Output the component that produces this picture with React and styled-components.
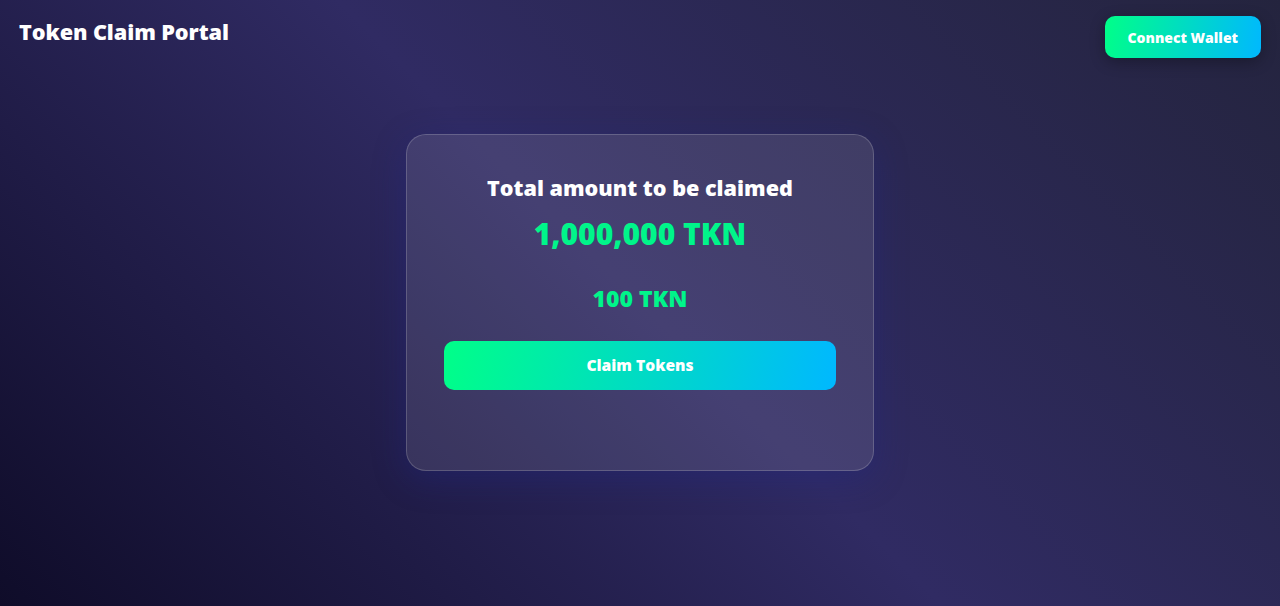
import React from "react";
import styled, { createGlobalStyle } from "styled-components";

const GlobalStyle = createGlobalStyle`
  html, body { margin: 0; padding: 0; height: 100%; }
  body {
    font-family: "Open Sans", "Noto Sans", sans-serif;
    background: linear-gradient(45deg, #0f0c29 0%, #302b63 50%, #24243e 100%);
    background-attachment: fixed;
    color: #ffffff;
  }
  #root { min-height: 100vh; }
`;

const Page = styled.div`
  min-height: 100vh;
  display: flex;
  flex-direction: column;
`;

const Header = styled.header`
  display: flex;
  justify-content: space-between;
  align-items: flex-start;
  padding: 16px 19px;
  height: 74px;
  box-sizing: border-box;
`;

const Title = styled.h1`
  margin: 3px 0 0;
  font-size: 21.7px;
  line-height: 26px;
  font-weight: 800;
  letter-spacing: -0.1px;
`;

const GradientButton = styled.button`
  border: none;
  cursor: pointer;
  color: #ffffff;
  font-family: inherit;
  font-weight: 800;
  background: linear-gradient(100deg, #00ff88 0%, #00b8ff 100%);
  border-radius: ${(p) => p.$radius || 10}px;
  height: ${(p) => p.$height}px;
  width: ${(p) => (p.$full ? "100%" : "auto")};
  padding: 0 ${(p) => p.$padX || 0}px;
  font-size: ${(p) => p.$fontSize}px;
  box-shadow: ${(p) => (p.$shadow ? "0 4px 15px rgba(0, 0, 0, 0.3)" : "none")};
`;

const Main = styled.main`
  flex: 1;
  display: flex;
  justify-content: center;
  align-items: center;
  padding-bottom: 76px;
`;

const Card = styled.section`
  width: 468px;
  box-sizing: border-box;
  padding: 40px 37px 80px;
  border-radius: 20px;
  background: rgba(255, 255, 255, 0.1);
  border: 1px solid rgba(255, 255, 255, 0.18);
  box-shadow: 0 8px 32px rgba(31, 38, 135, 0.37);
  display: flex;
  flex-direction: column;
  align-items: center;
  text-align: center;
`;

const Label = styled.h2`
  margin: 0;
  font-size: 21.6px;
  line-height: 26px;
  font-weight: 800;
`;

const Amount = styled.div`
  color: #00f58a;
  font-weight: 800;
  font-size: ${(p) => p.$size}px;
  line-height: ${(p) => p.$lh}px;
  margin-top: ${(p) => p.$mt}px;
`;

const ClaimRow = styled.div`
  width: 100%;
  margin-top: 30px;
`;

export default function App() {
  return (
    <>
      <GlobalStyle />
      <Page>
        <Header>
          <Title>Token Claim Portal</Title>
          <GradientButton $height={42} $padX={23} $fontSize={14} $shadow>
            Connect Wallet
          </GradientButton>
        </Header>
        <Main>
          <Card>
            <Label>Total amount to be claimed</Label>
            <Amount $size={30} $lh={34} $mt={16}>1,000,000 TKN</Amount>
            <Amount $size={23} $lh={26} $mt={34}>100 TKN</Amount>
            <ClaimRow>
              <GradientButton $full $height={49} $fontSize={15.6}>
                Claim Tokens
              </GradientButton>
            </ClaimRow>
          </Card>
        </Main>
      </Page>
    </>
  );
}
